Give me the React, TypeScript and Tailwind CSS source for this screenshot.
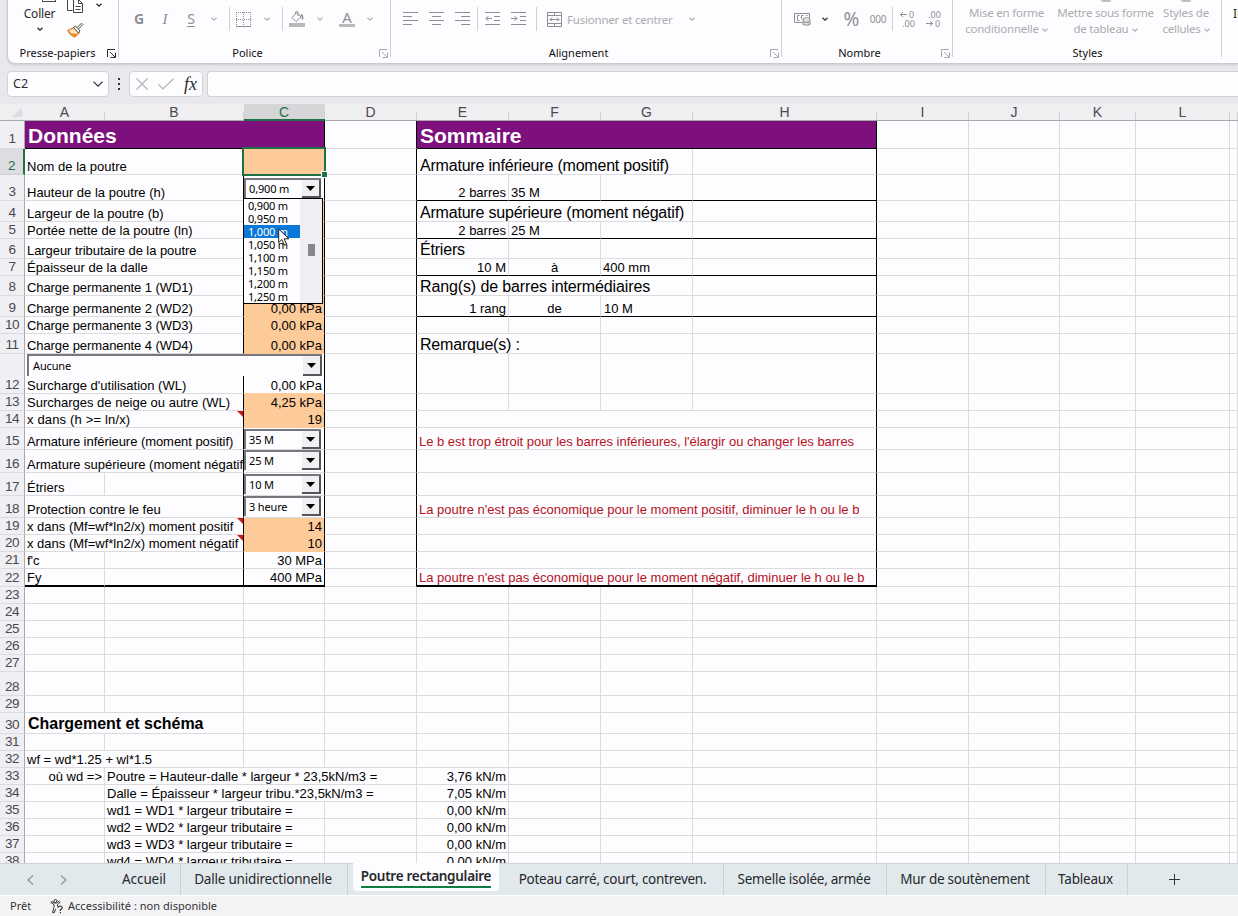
import React from "react";
import { twMerge } from "tailwind-merge";

interface CellData {
  col: string;
  text?: string;
  span?: number;
  className?: string;
  note?: boolean;
}

interface RowData {
  n: number;
  height: string;
  cells?: CellData[];
  combo?: { value: string; className: string };
}

const COLUMNS = ["A", "B", "C", "D", "E", "F", "G", "H", "I", "J", "K", "L", "M"];

const GRID =
  "grid grid-cols-[25px_80px_139px_81px_92px_92px_92px_92px_184px_92px_91px_76px_94px_8px]";

const SPANS: Record<number, string> = {
  1: "col-span-1",
  2: "col-span-2",
  3: "col-span-3",
  4: "col-span-4",
};

const ORANGE = "bg-[#fdcb99] border-b-[#fdcb99]";
const LABEL = "pl-[2px]";
const BIG = "pl-[3px] text-[16px] leading-[16px] tracking-[-0.2px]";
const TITLE =
  "bg-[#7d107d] text-white font-bold text-[21px] leading-[24px] pl-[3px] tracking-normal border-b-black";
const VALUE = "justify-end pr-[2px]";
const CENTER = "justify-center";
const RED = "pl-[2px] text-[#b5121f]";

const ROWS: RowData[] = [
  {
    n: 1,
    height: "h-[28px]",
    cells: [
      { col: "A", span: 3, text: "Données", className: TITLE },
      { col: "E", span: 4, text: "Sommaire", className: TITLE },
    ],
  },
  {
    n: 2,
    height: "h-[26px]",
    cells: [
      { col: "A", span: 2, text: "Nom de la poutre", className: LABEL },
      { col: "C", className: ORANGE },
      { col: "E", span: 3, text: "Armature inférieure (moment positif)", className: BIG },
    ],
  },
  {
    n: 3,
    height: "h-[26px]",
    cells: [
      { col: "A", span: 2, text: "Hauteur de la poutre (h)", className: LABEL },
      { col: "E", text: "2 barres", className: VALUE },
      { col: "F", text: "35 M", className: LABEL },
    ],
    combo: { value: "0,900 m", className: "left-[244px] top-[3px] w-[77px]" },
  },
  {
    n: 4,
    height: "h-[21px]",
    cells: [
      { col: "A", span: 2, text: "Largeur de la poutre (b)", className: LABEL },
      { col: "C", className: ORANGE },
      { col: "E", span: 3, text: "Armature supérieure (moment négatif)", className: BIG },
    ],
  },
  {
    n: 5,
    height: "h-[17px]",
    cells: [
      { col: "A", span: 2, text: "Portée nette de la poutre (ln)", className: LABEL },
      { col: "C", className: ORANGE },
      { col: "E", text: "2 barres", className: VALUE },
      { col: "F", text: "25 M", className: LABEL },
    ],
  },
  {
    n: 6,
    height: "h-[20px]",
    cells: [
      {
        col: "A",
        span: 2,
        text: "Largeur tributaire de la poutre",
        className: `${LABEL} tracking-[-0.06px]`,
      },
      { col: "C", className: ORANGE },
      { col: "E", text: "Étriers", className: BIG },
    ],
  },
  {
    n: 7,
    height: "h-[17px]",
    cells: [
      { col: "A", span: 2, text: "Épaisseur de la dalle", className: LABEL },
      { col: "C", className: ORANGE },
      { col: "E", text: "10 M", className: VALUE },
      { col: "F", text: "à", className: CENTER },
      { col: "G", text: "400 mm", className: LABEL },
    ],
  },
  {
    n: 8,
    height: "h-[20px]",
    cells: [
      {
        col: "A",
        span: 2,
        text: "Charge permanente 1 (WD1)",
        className: `${LABEL} tracking-[-0.08px]`,
      },
      { col: "C", className: ORANGE },
      {
        col: "E",
        span: 3,
        text: "Rang(s) de barres intermédiaires",
        className: `${BIG} tracking-[-0.12px]`,
      },
    ],
  },
  {
    n: 9,
    height: "h-[21px]",
    cells: [
      {
        col: "A",
        span: 2,
        text: "Charge permanente 2 (WD2)",
        className: `${LABEL} tracking-[-0.08px]`,
      },
      { col: "C", text: "0,00 kPa", className: `${VALUE} ${ORANGE}` },
      { col: "E", text: "1 rang", className: VALUE },
      { col: "F", text: "de", className: CENTER },
      { col: "G", text: "10 M", className: "pl-[3px]" },
    ],
  },
  {
    n: 10,
    height: "h-[17px]",
    cells: [
      {
        col: "A",
        span: 2,
        text: "Charge permanente 3 (WD3)",
        className: `${LABEL} tracking-[-0.08px]`,
      },
      { col: "C", text: "0,00 kPa", className: `${VALUE} ${ORANGE}` },
    ],
  },
  {
    n: 11,
    height: "h-[20px]",
    cells: [
      {
        col: "A",
        span: 2,
        text: "Charge permanente 4 (WD4)",
        className: `${LABEL} tracking-[-0.08px]`,
      },
      { col: "C", text: "0,00 kPa", className: `${VALUE} ${ORANGE}` },
      { col: "E", span: 2, text: "Remarque(s) :", className: BIG },
    ],
  },
  {
    n: 12,
    height: "h-[40px]",
    cells: [
      { col: "A", span: 2, text: "Surcharge d'utilisation (WL)", className: LABEL },
      { col: "C", text: "0,00 kPa", className: `${VALUE} border-b-[#fdcb99]` },
    ],
    combo: { value: "Aucune", className: "left-[27px] top-0 h-[22px] w-[295px] pl-[4px]" },
  },
  {
    n: 13,
    height: "h-[17px]",
    cells: [
      { col: "A", span: 2, text: "Surcharges de neige ou autre (WL)", className: LABEL },
      { col: "C", text: "4,25 kPa", className: `${VALUE} ${ORANGE}` },
    ],
  },
  {
    n: 14,
    height: "h-[17px]",
    cells: [
      {
        col: "A",
        span: 2,
        text: "x dans (h >= ln/x)",
        className: `${LABEL} tracking-[0.16px]`,
        note: true,
      },
      { col: "C", text: "19", className: `${VALUE} ${ORANGE}` },
      { col: "E", span: 4 },
    ],
  },
  {
    n: 15,
    height: "h-[22px]",
    cells: [
      {
        col: "A",
        span: 2,
        text: "Armature inférieure (moment positif)",
        className: `${LABEL} tracking-[-0.05px]`,
      },
      {
        col: "E",
        span: 4,
        text: "Le b est trop étroit pour les barres inférieures, l'élargir ou changer les barres",
        className: `${RED} tracking-[-0.03px]`,
      },
    ],
    combo: { value: "35 M", className: "left-[244px] top-[1px] w-[77px]" },
  },
  {
    n: 16,
    height: "h-[23px]",
    cells: [
      { col: "A", span: 2, text: "Armature supérieure (moment négatif)", className: LABEL },
      { col: "E", span: 4 },
    ],
    combo: { value: "25 M", className: "left-[244px] top-0 w-[77px]" },
  },
  {
    n: 17,
    height: "h-[23px]",
    cells: [
      { col: "A", text: "Étriers", className: LABEL },
      { col: "E", span: 4 },
    ],
    combo: { value: "10 M", className: "left-[244px] top-[1px] w-[77px]" },
  },
  {
    n: 18,
    height: "h-[22px]",
    cells: [
      { col: "A", span: 2, text: "Protection contre le feu", className: LABEL },
      {
        col: "E",
        span: 4,
        text: "La poutre n'est pas économique pour le moment positif, diminuer le h ou le b",
        className: RED,
      },
    ],
    combo: { value: "3 heure", className: "left-[244px] top-0 w-[77px]" },
  },
  {
    n: 19,
    height: "h-[17px]",
    cells: [
      {
        col: "A",
        span: 2,
        text: "x dans (Mf=wf*ln2/x) moment positif",
        className: LABEL,
        note: true,
      },
      { col: "C", text: "14", className: `${VALUE} ${ORANGE}` },
      { col: "E", span: 4 },
    ],
  },
  {
    n: 20,
    height: "h-[17px]",
    cells: [
      {
        col: "A",
        span: 2,
        text: "x dans (Mf=wf*ln2/x) moment négatif",
        className: LABEL,
        note: true,
      },
      { col: "C", text: "10", className: `${VALUE} ${ORANGE}` },
      { col: "E", span: 4 },
    ],
  },
  {
    n: 21,
    height: "h-[17px]",
    cells: [
      { col: "A", text: "f'c", className: LABEL },
      { col: "C", text: "30 MPa", className: VALUE },
      { col: "E", span: 4 },
    ],
  },
  {
    n: 22,
    height: "h-[18px]",
    cells: [
      { col: "A", text: "Fy", className: LABEL },
      { col: "C", text: "400 MPa", className: VALUE },
      {
        col: "E",
        span: 4,
        text: "La poutre n'est pas économique pour le moment négatif, diminuer le h ou le b",
        className: RED,
      },
    ],
  },
  { n: 23, height: "h-[17px]" },
  { n: 24, height: "h-[17px]" },
  { n: 25, height: "h-[17px]" },
  { n: 26, height: "h-[17px]" },
  { n: 27, height: "h-[17px]" },
  { n: 28, height: "h-[24px]" },
  { n: 29, height: "h-[17px]" },
  {
    n: 30,
    height: "h-[21px]",
    cells: [
      {
        col: "A",
        span: 2,
        text: "Chargement et schéma",
        className: `${BIG} font-bold leading-[18px] tracking-[-0.03px]`,
      },
    ],
  },
  { n: 31, height: "h-[17px]" },
  {
    n: 32,
    height: "h-[17px]",
    cells: [{ col: "A", span: 2, text: "wf = wd*1.25 + wl*1.5", className: LABEL }],
  },
  {
    n: 33,
    height: "h-[17px]",
    cells: [
      { col: "A", text: "où wd =>", className: VALUE },
      {
        col: "B",
        span: 3,
        text: "Poutre = Hauteur-dalle * largeur * 23,5kN/m3 =",
        className: LABEL,
      },
      { col: "E", text: "3,76 kN/m", className: VALUE },
    ],
  },
  {
    n: 34,
    height: "h-[17px]",
    cells: [
      {
        col: "B",
        span: 3,
        text: "Dalle = Épaisseur * largeur tribu.*23,5kN/m3 =",
        className: LABEL,
      },
      { col: "E", text: "7,05 kN/m", className: VALUE },
    ],
  },
  ...[1, 2, 3, 4].map((i) => ({
    n: 34 + i,
    height: "h-[17px]",
    cells: [
      { col: "B", span: 2, text: `wd${i} = WD${i} * largeur tributaire =`, className: LABEL },
      { col: "E", text: "0,00 kN/m", className: VALUE },
    ],
  })),
];

const TABS = [
  { label: "Accueil", className: "w-[71px] tracking-[-0.1px]" },
  { label: "Dalle unidirectionnelle", className: "w-[167px] tracking-[-0.2px]" },
  { label: "Poutre rectangulaire", className: "w-[156px]", active: true },
  { label: "Poteau carré, court, contreven.", className: "w-[220px] tracking-[-0.25px]" },
  { label: "Semelle isolée, armée", className: "w-[163px] tracking-[-0.25px]" },
  { label: "Mur de soutènement", className: "w-[159px] tracking-[-0.25px]" },
  { label: "Tableaux", className: "w-[82px] tracking-[-0.2px]" },
];

const LIST_ITEMS = [
  "0,900 m",
  "0,950 m",
  "1,000 m",
  "1,050 m",
  "1,100 m",
  "1,150 m",
  "1,200 m",
  "1,250 m",
];

/* ---------- Icons ---------- */

const Caret = ({ className = "" }: { className?: string }) => (
  <svg
    className={twMerge("h-[4px] w-[6px] text-[#b4b4b8]", className)}
    viewBox="0 0 6 4"
    fill="none"
    stroke="currentColor"
    strokeWidth="1.3"
  >
    <path d="M0.5 0.7 3 3.1 5.5 0.7" />
  </svg>
);

const Launcher = ({ className = "" }: { className?: string }) => (
  <svg
    className={twMerge("h-[9px] w-[9px] text-[#a9a9ad]", className)}
    viewBox="0 0 9 9"
    fill="none"
    stroke="currentColor"
  >
    <path d="M0.5 8V0.5H8M3 3l5 5M8.5 3.5v5h-5" />
  </svg>
);

const Divider = () => <span className="h-6 w-px shrink-0 bg-[#d0cfd3]" />;

const AlignIcon = ({ d }: { d: string }) => (
  <svg className="h-[14px] w-[15px] text-[#8f8f93]" viewBox="0 0 15 14" fill="none" stroke="currentColor">
    <path d={d} />
  </svg>
);

const Slot = ({ className, children }: { className: string; children?: React.ReactNode }) => (
  <span className={`flex shrink-0 items-center justify-center ${className}`}>{children}</span>
);

/* ---------- Ribbon ---------- */

interface GroupProps {
  label: string;
  className: string;
  labelClass?: string;
  launcher?: string;
  children: React.ReactNode;
}

const Group: React.FC<GroupProps> = ({ label, className, labelClass = "", launcher, children }) => (
  <div className={`relative flex shrink-0 flex-col ${className}`}>
    <div className="flex h-[45px] items-start">{children}</div>
    <div className={`h-4 text-center text-[11px] leading-4 text-[#111] ${labelClass}`}>{label}</div>
    {launcher !== undefined && (
      <Launcher className={`absolute bottom-[5px] right-[3px] ${launcher}`} />
    )}
    <span className="absolute bottom-[6px] right-0 top-0 w-px bg-[#cfced2]" />
  </div>
);

const StyleButton = ({ lines, className }: { lines: [string, string]; className: string }) => (
  <div
    className={`flex flex-col items-center whitespace-nowrap text-[11.5px] leading-4 tracking-[-0.22px] text-[#acacb0] ${className}`}
  >
    <span className="mb-[3px] h-[2px] w-[10px] rounded-b-full bg-[#bdbdc0]" />
    <span>{lines[0]}</span>
    <span className="flex items-center gap-[3px]">
      {lines[1]}
      <Caret className="mt-0.5" />
    </span>
  </div>
);

const Ribbon = () => (
  <div className="ml-[7px] flex h-[64px] overflow-hidden rounded-bl-lg border-b border-l border-[#cbcace] bg-[#fdfcfe] shadow-sm">
    <Group label="Presse-papiers" className="w-[111px]" labelClass="pr-[12px]" launcher="text-[#2b2b2b]">
      <div className="flex w-[48px] flex-col items-center pl-[15px]">
        <span className="ml-[18px] h-[2px] w-[14px] shrink-0 border border-t-0 border-[#4a4a4a]" />
        <span className="mt-1 text-[12px] leading-4 tracking-[-0.2px] text-[#2b2b2b]">Coller</span>
        <Caret className="mt-[5px] text-[#2b2b2b]" />
      </div>
      <div className="flex flex-col pl-[11px]">
        <div className="flex h-[13px] items-start gap-[12px]">
          <svg className="h-[13px] w-[17px]" viewBox="0 0 17 13" fill="#fff" stroke="#444">
            <path d="M0.5 0v10.5h5" />
            <path d="M6.5 -1v13.500h9V3.500L11.500 -0.500M11.500 0v3.500h4M8.500 6.500h5M8.500 9.500h5" />
          </svg>
          <Caret className="mt-[3px] text-[#2b2b2b]" />
        </div>
        <svg className="mt-[9px] h-[16px] w-[17px]" viewBox="0 0 17 16">
          <path d="M1 8.500 7 5.500 12 11 7.500 15Q3 13 1 8.500Z" fill="#fbe3c0" stroke="#e07f1a" strokeWidth="1.300" />
          <path d="M3 11l5 3.500 2-2.500z" fill="#e8871e" />
          <path d="M6.500 5.500 8.500 4 13 9l-1.500 2z" fill="#fff" stroke="#4a4a4a" />
          <path d="M10 5.800 14.500 1.200 15.800 2.500 11.500 7" fill="#fff" stroke="#4a4a4a" />
        </svg>
      </div>
    </Group>

    <Group label="Police" className="w-[272px]" labelClass="pr-[15px]" launcher="">
      <div className="flex h-[38px] items-center pl-[7px]">
        <Slot className="w-[26px] pb-[2px] text-[14px] font-bold text-[#8f8f93]">G</Slot>
        <Slot className="w-[26px] font-['Liberation_Serif',serif] text-[15px] italic text-[#8f8f93]">I</Slot>
        <Slot className="w-[26px] pb-[2px] text-[14px] text-[#8f8f93] underline underline-offset-2">S</Slot>
        <Slot className="w-[20px]"><Caret /></Slot>
        <Slot className="w-[10px]"><Divider /></Slot>
        <Slot className="w-[19px]">
          <svg className="h-[15px] w-[15px]" viewBox="0 0 15 15" fill="none" stroke="#8f8f93">
            <path d="M0.500 0v14M14.500 0v14M7.500 0v14M0 0.500h15M0 7.500h15" strokeDasharray="1 1" />
            <path d="M0 14.500h15" />
          </svg>
        </Slot>
        <Slot className="w-[28px]"><Caret /></Slot>
        <Slot className="w-[2px]"><Divider /></Slot>
        <Slot className="w-[28px]">
          <svg className="h-[16px] w-[16px]" viewBox="0 0 16 16" fill="none" stroke="#8f8f93">
            <path d="M3 6.500 8 1.500 12 6 7 10.500Z" />
            <path d="M6.500 3V1.500a1.200 1.200 0 0 1 2.400 0V5" />
            <path d="M12 3.500q2 1 1.500 5" strokeWidth="1.600" />
            <path d="M0 14h16" stroke="#b9b9bc" strokeWidth="4" />
          </svg>
        </Slot>
        <Slot className="w-[18px]"><Caret /></Slot>
        <Slot className="w-[36px] flex-col">
          <span className="text-[15px] leading-[13px] text-[#8f8f93]">A</span>
          <span className="h-[3px] w-4 bg-[#b9b9bc]" />
        </Slot>
        <Slot className="w-[10px]"><Caret /></Slot>
      </div>
    </Group>

    <Group label="Alignement" className="w-[391px]" labelClass="pr-[16px]" launcher="">
      <div className="flex h-[38px] items-center pl-[6px]">
        <Slot className="w-[26px]"><AlignIcon d="M0 0.5h15M0 4.5h9M0 8.5h15M0 12.5h9" /></Slot>
        <Slot className="w-[26px]"><AlignIcon d="M0 0.5h15M3 4.5h9M0 8.5h15M3 12.5h9" /></Slot>
        <Slot className="w-[26px]"><AlignIcon d="M0 0.5h15M6 4.5h9M0 8.5h15M6 12.5h9" /></Slot>
        <Slot className="w-[4px]"><Divider /></Slot>
        <Slot className="w-[26px]">
          <AlignIcon d="M0 0.5h15M9 4.5h6M9 8.5h6M0 12.5h15M1 6.5h6M3.500 4 1 6.500 3.500 9" />
        </Slot>
        <Slot className="w-[26px]">
          <AlignIcon d="M0 0.5h15M9 4.5h6M9 8.5h6M0 12.5h15M0 6.5h6M3.500 4 6 6.500 3.500 9" />
        </Slot>
        <Slot className="w-[10px]"><Divider /></Slot>
        <Slot className="w-[26px]">
          <svg className="h-[15px] w-[15px]" viewBox="0 0 15 15" fill="none" stroke="#8f8f93">
            <path d="M0.500 0.500h14v14h-14zM0.500 3.500h14M0.500 11.500h14M7.500 0.500v3M7.500 11.500v3" />
            <path d="M3 7.500h9M5 5.500l-2 2 2 2M10 5.500l2 2-2 2" />
          </svg>
        </Slot>
        <span className="w-[115px] whitespace-nowrap pt-px text-[11.5px] tracking-[-0.2px] text-[#acacb0]">
          Fusionner et centrer
        </span>
        <Slot className="w-[20px]"><Caret /></Slot>
      </div>
    </Group>

    <Group label="Nombre" className="w-[171px]" labelClass="pr-[16px]" launcher="">
      <div className="flex h-[38px] items-center pl-[7px]">
        <Slot className="w-[26px]">
          <svg className="h-[14px] w-[17px]" viewBox="0 0 17 14" fill="none" stroke="#8f8f93">
            <path d="M8 10.500H0.500v-9h15V6M5.500 3.500h-2v5h2M7.500 7V3.500h2M12 3.500h1.500" />
            <ellipse cx="12.500" cy="7" rx="3.500" ry="1.300" fill="#fff" />
            <path d="M9 7v5.500q3.500 1.500 7 0V7M9 9.800q3.500 1.500 7 0" fill="#ddd" />
          </svg>
        </Slot>
        <Slot className="w-[20px]"><Caret className="text-[#333]" /></Slot>
        <Slot className="w-[33px] text-[19px] text-[#8f8f93]">%</Slot>
        <Slot className="w-[20px] text-[10px] tracking-[-0.3px] text-[#8f8f93]">000</Slot>
        <Slot className="w-[8px]"><Divider /></Slot>
        <Slot className="w-[22px] flex-col text-[9px] leading-[9px] text-[#8f8f93]">
          <span className="flex items-center gap-[2px]">
            <svg className="h-[7px] w-[7px]" viewBox="0 0 7 7" fill="none" stroke="currentColor">
              <path d="M0.500 3.500H7M3 1 0.500 3.500 3 6" />
            </svg>
            0
          </span>
          <span className="pl-[3px]">.00</span>
        </Slot>
        <Slot className="w-[30px] flex-col text-[9px] leading-[9px] text-[#8f8f93]">
          <span className="pl-[3px]">.00</span>
          <span className="flex items-center gap-[2px]">
            <svg className="h-[7px] w-[7px]" viewBox="0 0 7 7" fill="none" stroke="currentColor">
              <path d="M0 3.500h6.500M4 1l2.500 2.500L4 6" />
            </svg>
            0
          </span>
        </Slot>
      </div>
    </Group>

    <Group label="Styles" className="w-[269px]">
      <div className="flex">
        <StyleButton lines={["Mise en forme", "conditionnelle"]} className="w-[107px] [&>span:first-child]:invisible" />
        <StyleButton lines={["Mettre sous forme", "de tableau"]} className="w-[91px]" />
        <StyleButton lines={["Styles de", "cellules"]} className="w-[70px]" />
      </div>
    </Group>
    <div className="whitespace-nowrap pl-[11px] pt-[6px] text-[12px] leading-4 text-[#2b2b2b]">In</div>
  </div>
);

const FormulaBar = () => (
  <div className="mt-[7px] flex h-[26px] pl-[7px] text-[#2b2b2b]">
    <div className="flex w-[102px] items-center justify-between rounded border border-[#d3d2d6] bg-[#fdfcfe] pl-[5px] pr-[5px] text-[12.5px]">
      C2
      <svg className="h-[6px] w-[10px]" viewBox="0 0 10 6" fill="none" stroke="#333" strokeWidth="1.200">
        <path d="M0.500 0.700 5 5.200 9.500 0.700" />
      </svg>
    </div>
    <div className="flex w-[20px] flex-col items-center justify-center gap-[3px]">
      <span className="size-[2px] bg-[#333]" />
      <span className="size-[2px] bg-[#333]" />
      <span className="size-[2px] bg-[#333]" />
    </div>
    <div className="flex w-[74px] items-center rounded border border-[#d3d2d6] bg-[#fdfcfe] pl-[6px]">
      <svg className="h-[12px] w-[12px]" viewBox="0 0 12 12" stroke="#b3b3b7" strokeWidth="1.200">
        <path d="M0.500 0.500l11 11M11.500 0.500l-11 11" />
      </svg>
      <svg className="ml-[10px] h-[12px] w-[16px]" viewBox="0 0 16 12" fill="none" stroke="#b3b3b7" strokeWidth="1.200">
        <path d="M0.500 6.500 5 11 15.500 0.800" />
      </svg>
      <span className="ml-[10px] font-['Liberation_Serif',serif] text-[18px] italic leading-4">fx</span>
    </div>
    <div className="ml-[4px] flex-1 rounded-l border border-r-0 border-[#d3d2d6] bg-[#fdfcfe]" />
  </div>
);

/* ---------- Sheet ---------- */

const Combo = ({ value, className }: { value: string; className: string }) => (
  <div
    className={twMerge(
      "absolute z-10 flex h-[20px] items-center justify-between border-l-2 border-t-2 border-[#77777b] bg-[#fdfcfe] pl-[3px] font-['Noto_Sans',sans-serif] text-[11px] tracking-[-0.15px] text-black",
      className
    )}
  >
    {value}
    <span className="flex h-full w-[19px] items-center justify-center border-b-2 border-r-2 border-[#55555a] bg-[#f0eff2]">
      <svg className="h-[5px] w-[9px]" viewBox="0 0 9 5">
        <path d="M0 0h9L4.500 5z" fill="#000" />
      </svg>
    </span>
  </div>
);

const DropList = () => (
  <div className="absolute left-[243px] top-[94px] z-20 flex h-[106px] w-[80px] overflow-hidden border border-black bg-[#fdfcfe] font-['Noto_Sans',sans-serif] text-[11px] tracking-[-0.2px]">
    <ul className="w-[56px]">
      {LIST_ITEMS.map((item) => (
        <li
          key={item}
          className={`h-[13px] whitespace-nowrap pl-[4px] leading-[13px] ${
            item === "1,000 m" ? "bg-[#0a78d6] text-white" : "text-black"
          }`}
        >
          {item}
        </li>
      ))}
    </ul>
    <div className="flex-1 bg-[#efeef2] pl-[8px] pt-[45px]">
      <div className="h-[12px] w-[7px] bg-[#87868b]" />
    </div>
  </div>
);

const Pointer = () => (
  <svg className="absolute left-[278px] top-[124px] z-30 h-[19px] w-[13px]" viewBox="0 0 13 19">
    <path d="M0.700 1v13.500l3.200-3 2.500 5.800 2.200-1-2.500-5.500h4.700z" fill="#fff" stroke="#222" />
  </svg>
);

const borderClass = (n: number, first: string, last: string) => {
  if (n > 22) return "";
  const inTable = first !== "D" && last <= "H";
  const out: string[] = [];
  if (last === "C" || last === "D" || last === "H") out.push("border-r-black");
  if (last === "B" && n > 2) out.push("border-r-black");
  if (first >= "E" && inTable && [3, 5, 7, 9].includes(n)) out.push("border-b-black");
  if (inTable && n === 22) out.push("border-b-2 border-b-black");
  return out.join(" ");
};

const SheetRow = ({ row }: { row: RowData }) => {
  const items: React.ReactNode[] = [];
  for (let i = 0; i < COLUMNS.length; ) {
    const col = COLUMNS[i];
    const cell = row.cells?.find((c) => c.col === col);
    const span = cell?.span ?? 1;
    const last = COLUMNS[i + span - 1];
    items.push(
      <div
        key={col}
        className={twMerge(
          "relative flex items-end overflow-hidden whitespace-pre border-b border-r border-[#dbdadd] leading-[14px]",
          SPANS[span],
          cell?.className,
          borderClass(row.n, col, last)
        )}
      >
        {cell?.text}
        {cell?.note && (
          <span className="absolute right-0 top-0 border-l-[6px] border-t-[6px] border-l-transparent border-t-[#d01818]" />
        )}
      </div>
    );
    i += span;
  }
  const selected = row.n === 2;
  return (
    <div className={`relative ${GRID} ${row.height}`}>
      <div
        className={`flex items-end justify-center border-b border-r text-[13.5px] leading-4 tracking-[-0.4px] ${
          selected
            ? "border-b-[#cfced2] border-r-2 border-r-[#1e7145] bg-[#dddce0] text-[#1e7145]"
            : "border-b-[#dbdadd] border-r-[#a8a8ad] bg-[#f0eff3] text-[#4a4a4e]"
        } ${row.n === 1 ? "pb-px" : ""}`}
      >
        {row.n}
      </div>
      {items}
      {row.combo && <Combo {...row.combo} />}
    </div>
  );
};

const Sheet = () => (
  <div className="relative h-[759px] overflow-hidden bg-[#fdfcfe] font-['Liberation_Sans',Arial,sans-serif] text-[13px] text-black">
    <div className={`${GRID} h-[17px] bg-[#efeef1] text-[14px] text-[#4a4a4e]`}>
      <div className="flex h-[17px] items-end justify-end border-b border-[#a8a8ad] pb-[3px] pr-[3px]">
        <span className="border-b-[10px] border-l-[10px] border-b-[#dddce0] border-l-transparent" />
      </div>
      {COLUMNS.map((col) => (
        <div
          key={col}
          className={`relative h-[17px] pr-px text-center leading-[16px] ${
            col === "C"
              ? "border-b-2 border-[#1e7145] bg-[#d6d5d8] text-[#1e7145]"
              : "border-b border-[#a8a8ad]"
          }`}
        >
          {col === "M" ? "" : col}
          <span className="absolute bottom-0 right-0 h-[8px] w-px bg-[#cfced2]" />
        </div>
      ))}
    </div>
    {ROWS.map((row) => (
      <SheetRow key={row.n} row={row} />
    ))}
    {/* active cell frame */}
    <div className="absolute left-[242px] top-[43px] z-10 h-[29px] w-[84px] border-2 border-[#1e7145]">
      <span className="absolute -bottom-[3px] -right-[3px] size-[5px] bg-[#1e7145] outline outline-white" />
    </div>
    <DropList />
    <Pointer />
  </div>
);

/* ---------- Bottom bars ---------- */

const TabBar = () => (
  <div className="flex h-[32px] border-t border-[#cfd4d8] bg-[#e2e9ed] text-[13.5px] text-[#26282c]">
    <div className="flex w-[110px] items-center gap-[26px] pl-[27px]">
      <svg className="h-[10px] w-[7px]" viewBox="0 0 7 10" fill="none" stroke="#8d9499" strokeWidth="1.200">
        <path d="M6 0.500 1 5l5 4.500" />
      </svg>
      <svg className="h-[10px] w-[7px]" viewBox="0 0 7 10" fill="none" stroke="#8d9499" strokeWidth="1.200">
        <path d="M1 0.500 6 5 1 9.500" />
      </svg>
    </div>
    {TABS.map((tab) =>
      tab.active ? (
        <div key={tab.label} className={`flex justify-center px-[5px] ${tab.className}`}>
          <div className="-mt-px flex h-[28px] w-full justify-center rounded-b bg-[#fdfcfe]">
            <span className="mt-[3px] h-[22px] whitespace-nowrap border-b-2 border-[#107c41] text-[13.5px] font-semibold leading-[21px] tracking-[-0.28px]">
              {tab.label}
            </span>
          </div>
        </div>
      ) : (
        <div
          key={tab.label}
          className={`flex items-center justify-center whitespace-nowrap border-r border-[#cbd3d9] pr-[2px] ${tab.className}`}
        >
          {tab.label}
        </div>
      )
    )}
    <div className="flex w-[92px] items-center justify-center">
      <svg className="h-[11px] w-[11px]" viewBox="0 0 11 11" stroke="#333">
        <path d="M5.500 0v11M0 5.500h11" />
      </svg>
    </div>
  </div>
);

const StatusBar = () => (
  <div className="flex h-[21px] items-center border-t border-white bg-[#f3f2f5] pl-[10px] text-[11px] tracking-[0.03px] text-[#333]">
    <span className="w-[40px]">Prêt</span>
    <svg className="mr-[4px] h-[15px] w-[14px]" viewBox="0 0 14 15" fill="none" stroke="#333">
      <circle cx="5.500" cy="2" r="1.500" />
      <path d="M0.800 3.500 4 5.500v3L2.500 13.500l1.500.5 1.700-4M10.500 3 7.500 5.500v2M0.800 3.500 2 2.500l2.500 1.500h2L9.500 2" />
      <path d="M8 8.800q.3-1.800 2.300-1.800 2 .2 1.900 1.800-.2 1.200-1.800 1.700v1.500M10.400 13v1.200" strokeWidth="1.200" />
    </svg>
    <span>Accessibilité : non disponible</span>
  </div>
);

export default function App() {
  return (
    <div className="h-[916px] w-[1238px] overflow-hidden bg-[#e9e8ec] font-['Noto_Sans','Open_Sans',sans-serif]">
      <Ribbon />
      <FormulaBar />
      <div className="h-[7px]" />
      <Sheet />
      <TabBar />
      <StatusBar />
    </div>
  );
}
